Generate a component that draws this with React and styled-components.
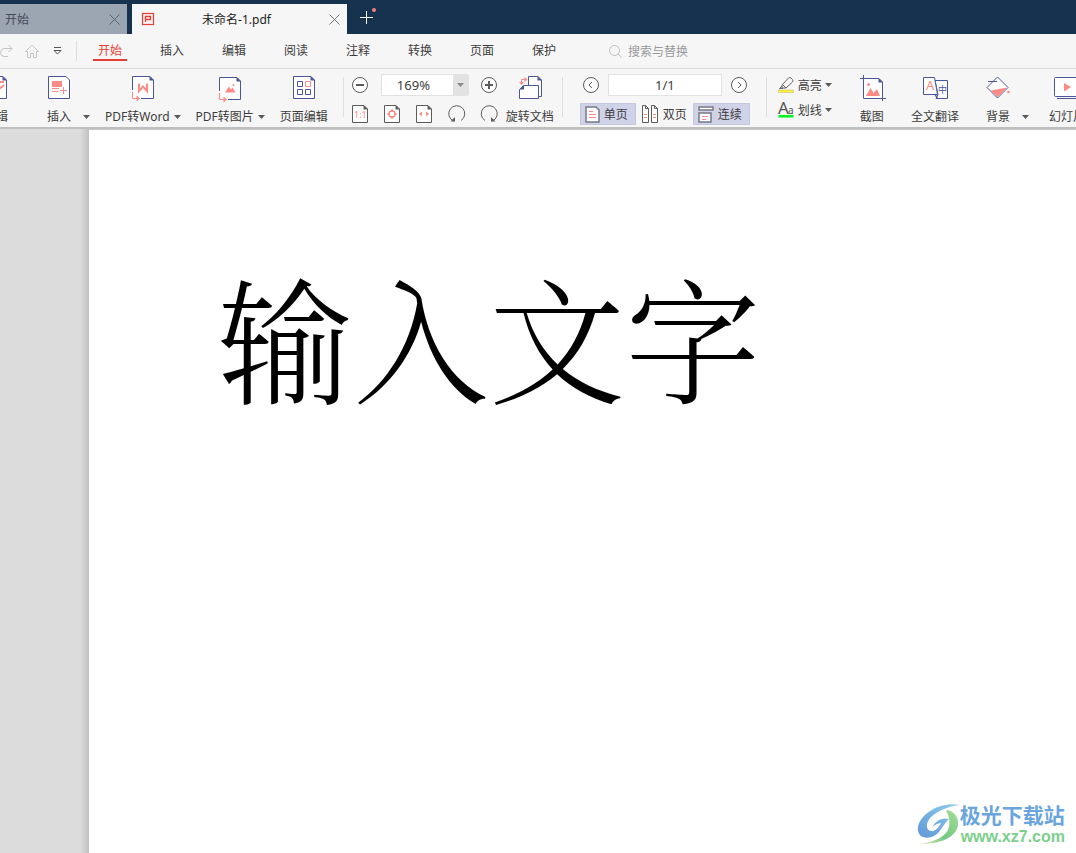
import React, { useState } from 'react'
import styled, { createGlobalStyle } from 'styled-components'

const GlobalStyle = createGlobalStyle`
  * {
    box-sizing: border-box;
  }
  body {
    margin: 0;
    overflow: hidden;
    background: #ffffff;
    color: #3d3d3d;
    font-family: "Noto Sans", "Noto Sans CJK SC", sans-serif;
    font-size: 12px;
  }
  button, input, select {
    font: inherit;
    color: inherit;
    border: none;
    margin: 0;
    padding: 0;
    background: none;
    outline: none;
  }
  svg {
    display: block;
    flex-shrink: 0;
    overflow: visible;
  }
`

const Window = styled.div`
  display: flex;
  flex-direction: column;
  height: 100vh;
  overflow: hidden;
`

const TabBar = styled.header`
  display: flex;
  gap: 5px;
  height: 34px;
  flex-shrink: 0;
  padding-top: 4px;
  background: #17324f;
`

const Tab = styled.div`
  display: flex;
  align-items: center;
  width: ${(p) => p.$width};
  padding: 0 7px 0 ${(p) => (p.$active ? '10px' : '5px')};
  background: ${(p) => (p.$active ? '#f6f6f6' : '#9ca6b3')};
  color: ${(p) => (p.$active ? '#222222' : '#444b55')};
`

const TabTitle = styled.button`
  flex: 1;
  height: 30px;
  padding-right: 10px;
  text-align: ${(p) => (p.$center ? 'center' : 'left')};
`

const IconButton = styled.button`
  display: flex;
  align-items: center;
  justify-content: center;
`

const NewTab = styled(IconButton)`
  width: 30px;
  height: 26px;
`

const MenuBar = styled.div`
  display: flex;
  align-items: center;
  height: 35px;
  flex-shrink: 0;
  background: #f6f6f6;
  border-bottom: 1px solid #dcdcdc;
`

const QuickAccess = styled.div`
  display: flex;
  align-items: center;
  gap: 12px;
  height: 20px;
  width: 77px;
  border-right: 1px solid #dddddd;
`

const Menu = styled.nav`
  display: flex;
  gap: 28px;
  margin-left: 16px;
`

const MenuItem = styled.button`
  width: 34px;
  height: 20px;
  line-height: 20px;
  white-space: nowrap;
  color: ${(p) => (p.$active ? '#e83e32' : '#3d3d3d')};
  box-shadow: inset 0 -2px ${(p) => (p.$active ? '#e83e32' : 'transparent')};
`

const Search = styled.label`
  display: flex;
  align-items: center;
  gap: 6px;
  margin-left: 48px;
  color: #9a9a9a;
`

const SearchInput = styled.input`
  width: 120px;
  &::placeholder {
    color: #9a9a9a;
    opacity: 1;
  }
`

const Toolbar = styled.div`
  display: flex;
  height: 60px;
  flex-shrink: 0;
  padding-top: 5px;
  overflow: hidden;
  background: #f6f6f6;
  border-bottom: 2px solid #bebebe;
`

const ToolGroup = styled.div`
  display: flex;
  flex-shrink: 0;
  gap: ${(p) => p.$gap || '15px'};
  padding: ${(p) => p.$padding || '0'};
`

const ConvertGroup = styled(ToolGroup)`
  margin-left: -16px;
`

const Tool = styled.button`
  display: flex;
  flex-direction: column;
  align-items: center;
  gap: 9px;
  padding-top: 2px;
  height: 52px;
`

const ToolLabel = styled.span`
  display: flex;
  align-items: center;
  gap: 4px;
  line-height: 16px;
  white-space: nowrap;
`

const SplitTool = styled.div`
  display: flex;
  align-items: flex-start;
  gap: 12px;
`

const CaretButton = styled(IconButton)`
  height: 52px;
  padding-top: 34px;
`

const Divider = styled.div`
  width: 1px;
  height: 40px;
  margin-top: 3px;
  flex-shrink: 0;
  background: #dfdfdf;
`

const Stack = styled.div`
  display: flex;
  flex-direction: column;
  gap: ${(p) => p.$gap || '7px'};
`

const Row = styled.div`
  display: flex;
  align-items: center;
  justify-content: space-between;
  gap: ${(p) => p.$gap || '0'};
  padding: ${(p) => p.$padding || '0'};
  height: 22px;
`

const SelectBox = styled.div`
  display: grid;
  grid-template-columns: 71px 16px;
  height: 22px;
  background: #ffffff;
  border: 1px solid #e2e2e2;
  width: 87px;
  font-size: 13px;
`

const ZoomSelect = styled.select`
  grid-area: 1 / 1 / 2 / 3;
  appearance: none;
  padding-left: 15px;
`

const SelectArrow = styled.span`
  grid-area: 1 / 2 / 2 / 3;
  display: flex;
  align-items: center;
  justify-content: center;
  pointer-events: none;
  background: #e2e2e2;
`

const PageInput = styled.input`
  width: 114px;
  height: 22px;
  font-size: 13px;
  text-align: center;
  background: #ffffff;
  border: 1px solid #e2e2e2;
`

const ViewButton = styled.button`
  display: flex;
  align-items: center;
  gap: 4px;
  height: 22px;
  padding: 0 ${(p) => (p.$active ? '7px' : '0')} 0 ${(p) => (p.$active ? '4px' : '0')};
  white-space: nowrap;
  border: ${(p) => (p.$active ? '1px solid #c5c7e0' : 'none')};
  background: ${(p) => (p.$active ? '#d0d2e8' : 'transparent')};
`

const MarkButton = styled.button`
  display: flex;
  align-items: center;
  gap: 3px;
  height: 22px;
  white-space: nowrap;
`

const Workspace = styled.main`
  position: relative;
  display: flex;
  flex: 1;
  min-height: 0;
`

const Gutter = styled.div`
  width: 89px;
  flex-shrink: 0;
  background: linear-gradient(to right, #dcdcdc 80px, #c2c2c2 89px);
`

const Page = styled.article`
  flex: 1;
  padding: 105px 0 0 128px;
  background: #ffffff;
  border-top: 1px solid #c8c8c8;
`

const PageText = styled.p`
  margin: 0;
  color: #000000;
  font-family: "Noto Serif CJK SC", "Noto Sans CJK SC", serif;
  font-weight: 300;
  font-size: 136px;
  line-height: 200px;
  white-space: nowrap;
`

const Watermark = styled.a`
  position: absolute;
  right: 11px;
  bottom: 6px;
  display: flex;
  align-items: center;
  text-decoration: none;
`

const SiteName = styled.span`
  color: #6aa5de;
  font-size: 21px;
  font-weight: 700;
  line-height: 24px;
`

const SiteUrl = styled.span`
  color: #7bcf8d;
  font-family: "Liberation Sans", sans-serif;
  font-size: 16px;
  font-weight: 700;
  line-height: 20px;
  padding-left: 1px;
`

const navy = '#4b5599'
const coral = '#fd8a84'
const grey = '#5c5c5c'

const Caret = ({ color = '#5a5a5a' }) => (
  <svg width="7" height="4" viewBox="0 0 7 4">
    <path d="M0 0h7L3.5 4z" fill={color} />
  </svg>
)

const CloseIcon = ({ color }) => (
  <svg width="11" height="11" viewBox="0 0 11 11" stroke={color}>
    <path d="M.5.5l10 10M10.5.5l-10 10" />
  </svg>
)

const PdfIcon = () => (
  <svg width="12" height="12" viewBox="0 0 12 12" fill="none" stroke="#e83e32">
    <rect x=".5" y=".5" width="11" height="11" strokeWidth="1.2" />
    <path d="M3.5 9V3.5h5v3h-5" strokeWidth="1.3" />
  </svg>
)

const ToolIcon = ({ children }) => (
  <svg width="24" height="24" viewBox="0 0 24 24" fill="none" stroke={navy}>
    {children}
  </svg>
)

const Sheet = () => (
  <>
    <path d="M1.5.5H19L22.5 4v18.5h-21z" fill="#fff" />
    <path d="M18.5 0v4.5H23z" fill={navy} stroke="none" />
  </>
)

// sheet with an open bottom-left corner and the "convert to" arrow
const ConvertSheet = () => (
  <>
    <path d="M1 0h18l4 4v19H1z" fill="#fff" stroke="none" />
    <path d="M1.5 14V.5H19L22.5 4v18.5H10" />
    <path d="M18.5 0v4.5H23z" fill={navy} stroke="none" />
    <path d="M1.5 15.5v7H8" stroke={coral} />
    <path d="M5.5 19.5l3.5 3-3.5 3z" fill={coral} stroke="none" />
  </>
)

const EditIcon = () => (
  <ToolIcon>
    <Sheet />
    <path d="M6 12l4 5L20 9M12 6h8" stroke={coral} strokeWidth="2" />
  </ToolIcon>
)

const InsertIcon = () => (
  <ToolIcon>
    <path d="M1.5.5H19L22.5 4v18.5h-21z" fill="#fff" />
    <path d="M5 5h10v6H5z" fill={coral} stroke="none" />
    <path d="M5 12.5h7M5 15.500h6M13 14.500h7M16.500 11v7" stroke={coral} />
  </ToolIcon>
)

const WordIcon = () => (
  <ToolIcon>
    <ConvertSheet />
    <path d="M8 7.5v7.500l4-4.500 4 4.500v-7.500" stroke={coral} strokeWidth="2" />
  </ToolIcon>
)

const PictureIcon = () => (
  <ToolIcon>
    <g transform="translate(0 1)">
      <ConvertSheet />
      <path d="M7 15.500l4-6 2 3 1.500-2 3 5z" fill={coral} stroke="none" />
      <circle cx="15.500" cy="8" r="1" fill={coral} stroke="none" />
    </g>
  </ToolIcon>
)

const PageEditIcon = () => (
  <ToolIcon>
    <Sheet />
    <path d="M5.500 5.500h5v5h-5zM5.500 13.500h5v5h-5zM13.500 13.500h5v5h-5z" />
    <path d="M13.500 5.500h5v5h-5z" stroke={coral} />
  </ToolIcon>
)

const RotateDocIcon = () => (
  <ToolIcon>
    <path d="M10.500 9V.5H20L23.500 4v16.500H21" fill="#fff" />
    <path d="M19.500 0v4.500H24z" fill={navy} stroke="none" />
    <path d="M5.500 9.500h15v13h-19v-9z" fill="#fff" />
    <path d="M6 9v4.500H1.500z" fill={navy} stroke="none" />
    <path d="M3.500 7V3.500H7" stroke={coral} />
    <path d="M6.500 1l3 2.500-3 2.500zM1 6h5l-2.500 3z" fill={coral} stroke="none" />
  </ToolIcon>
)

const CropIcon = () => (
  <ToolIcon>
    <path d="M3 2h15l4 4v17H3z" fill="#fff" stroke="none" />
    <path d="M3.500-1v23.500H26M0 2.500h19L22.500 6v19" />
    <path d="M18.500 2v4.500H23z" fill={navy} stroke="none" />
    <path d="M6 20l4.500-8 3 5 3.500-4 3 7z" fill={coral} stroke="none" />
    <circle cx="8.500" cy="8.500" r="1.500" fill={coral} stroke="none" />
  </ToolIcon>
)

const TranslateIcon = () => (
  <ToolIcon>
    <path d="M12 4.500h12.500v18H13l2-4z" fill="#fff" />
    <path d="M.5 1.500h11l3 17H.5z" fill="#fff" />
    <path d="M12 18.500l2 4v-4" />
    <text x="3" y="14" fontSize="13" fill={coral} stroke="none">A</text>
    <text x="15" y="17" fontSize="9" fill={navy} stroke="none">中</text>
  </ToolIcon>
)

const BackgroundIcon = () => (
  <ToolIcon>
    <path d="M11.500 1L22 11.500 11.500 22 1 11.500z" fill="#fff" />
    <path d="M5 14.500L21 11.500 11.500 21z" fill={coral} stroke="none" />
    <path d="M2 5.500h9" />
    <circle cx="22.500" cy="16" r="1.300" fill={coral} stroke="none" />
  </ToolIcon>
)

const SlideIcon = () => (
  <svg width="36" height="24" viewBox="0 0 36 24" fill="none" stroke={navy}>
    <rect x="5.500" y="1.500" width="29" height="19" rx="1" fill="#fff" />
    <path d="M8 22.500h25" />
    <path d="M15 7l7 4-7 4.500z" fill={coral} stroke="none" />
  </svg>
)

const RoundIcon = ({ d, width = 1 }) => (
  <svg width="16" height="16" viewBox="0 0 16 16" fill="none" stroke={grey}>
    <circle cx="8" cy="8" r="7.500" fill="#fff" />
    <path d={d} strokeWidth={width} />
  </svg>
)

const FitIcon = ({ children }) => (
  <svg width="16" height="18" viewBox="0 0 16 18" fill="none" stroke={grey}>
    <path d="M.5.5H12L15.500 4v13.500H.5z" fill="#fff" />
    <path d="M11.500 0v4.500H16z" fill={grey} stroke="none" />
    {children}
  </svg>
)

const TurnIcon = ({ flip }) => (
  <svg width="16" height="18" viewBox="1 0 16 18" fill="none" stroke={grey}>
    <g transform={flip ? 'translate(18 0) scale(-1 1)' : undefined}>
      <path d="M5.500 16A8 8 0 1 1 13 15.500" />
      <path d="M2.500 16.500H7V12z" fill={grey} stroke="none" />
    </g>
  </svg>
)

const SinglePageIcon = () => (
  <svg width="15" height="17" viewBox="0 0 15 17" fill="none" stroke="#777a85">
    <path d="M1 1h10l3 3v12H1z" fill="#fff" strokeWidth="1.500" />
    <path d="M4 5.500h4M4 8.500h7M4 11.500h7" stroke={coral} />
  </svg>
)

const DoublePageIcon = () => (
  <svg width="17" height="18" viewBox="0 0 17 18" fill="none" stroke={grey}>
    <path d="M.5.5h3l3 3v14h-6zM9.500.5h3l3 3v14h-6z" fill="#fff" />
    <path d="M3.500.5v3h3M12.500.5v3h3" />
    <path d="M2 9.500h3M2 12.500h3M11 9.500h3M11 12.500h3" stroke={coral} />
  </svg>
)

const ContinuousIcon = () => (
  <svg width="16" height="17" viewBox="0 0 16 17" fill="none" stroke="#777a85" strokeWidth="1.500">
    <path d="M1 1h14v3H1z" fill="#fff" />
    <path d="M1 16V7h12v9z" fill="#fff" />
    <path d="M4 10.500h6M4 13.500h4" stroke={coral} strokeWidth="1" />
  </svg>
)

const HighlightIcon = () => (
  <svg width="17" height="16" viewBox="0 0 17 16" fill="none" stroke="#666">
    <path d="M4 8L10.500 1Q12 0 13 1L14.500 2.500Q15.500 4 14.500 5L8 11H4zM4.500 7.500L8 11M4 9L1.500 11.500H5" />
    <path d="M.5 13h15v2.500H.5z" fill="#ffee3c" stroke="#bdb76b" strokeWidth=".5" />
  </svg>
)

const UnderlineIcon = () => (
  <svg width="17" height="16" viewBox="0 0 17 16">
    <text x="0" y="12" fontSize="17" fill="#555">A</text>
    <text x="10" y="12" fontSize="10" fill="#555">a</text>
    <path d="M.5 13h15v2.500H.5z" fill="#00f51c" />
  </svg>
)

const SwirlLogo = () => (
  <svg width="43" height="42" viewBox="0 0 43 42">
    <defs>
      <linearGradient id="sky" x1="1" y1="0" x2="0" y2="1">
        <stop offset="0" stopColor="#8fd0ee" />
        <stop offset="1" stopColor="#5f97d8" />
      </linearGradient>
      <linearGradient id="leaf" x1="0" y1="1" x2="1" y2="0">
        <stop offset="0" stopColor="#e3e6a6" />
        <stop offset=".4" stopColor="#72c985" />
        <stop offset="1" stopColor="#a5dd94" />
      </linearGradient>
    </defs>
    <path d="M31 6C37 8 42 13 41 21 40 31 27 40 4 40 18 38 30 32 32 23 33 17 32 11 29 7z" fill="url(#leaf)" />
    <path d="M43 1C29-2 14 4 6 13 0 20-1 28 4 32c5 3 13 2 18-4 3-4 5-8 10-13-6-2-13 1-17 8 4-3 7-4 9-4-2 4-6 9-10 8-6-1-5-9 0-14C21 7 31 2 43 1z" fill="url(#sky)" />
  </svg>
)

const menuItems = ['开始', '插入', '编辑', '阅读', '注释', '转换', '页面', '保护']

const App = () => {
  const [menu, setMenu] = useState('开始')
  const [zoom, setZoom] = useState('169%')
  const [layout, setLayout] = useState('单页')
  const [continuous, setContinuous] = useState(true)

  return (
    <>
      <GlobalStyle />
      <Window>
        <TabBar>
          <Tab $width="127px">
            <TabTitle>开始</TabTitle>
            <IconButton aria-label="关闭"><CloseIcon color="#5b636e" /></IconButton>
          </Tab>
          <Tab $width="215px" $active>
            <PdfIcon />
            <TabTitle $center>未命名-1.pdf</TabTitle>
            <IconButton aria-label="关闭"><CloseIcon color="#777777" /></IconButton>
          </Tab>
          <NewTab aria-label="新建">
            <svg width="18" height="18" viewBox="0 0 18 18">
              <path d="M2 9.500h13M8.500 3v13" stroke="#fff" />
              <circle cx="16" cy="2" r="2" fill="#f47d7d" />
            </svg>
          </NewTab>
        </TabBar>

        <MenuBar>
          <QuickAccess>
            <IconButton aria-label="恢复">
              <svg width="13" height="14" viewBox="0 0 13 14" fill="none" stroke="#c4c4c4">
                <path d="M8 12.500H4Q.5 12 .5 8.500T4 4.500h8M8.500 1L12 4.500 8.500 8" />
              </svg>
            </IconButton>
            <IconButton aria-label="主页">
              <svg width="14" height="14" viewBox="0 0 14 14" fill="none" stroke="#c4c4c4">
                <path d="M.5 7.500L7 1l6.500 6.500h-2v6h-3v-4h-3v4h-3v-6z" />
              </svg>
            </IconButton>
            <IconButton aria-label="更多">
              <svg width="13" height="8" viewBox="0 0 13 8" fill="none" stroke="#555">
                <path d="M3 .5h7M3 3.500h7L6.500 7z" />
              </svg>
            </IconButton>
          </QuickAccess>
          <Menu>
            {menuItems.map((item) => (
              <MenuItem key={item} $active={item === menu} onClick={() => setMenu(item)}>{item}</MenuItem>
            ))}
          </Menu>
          <Search>
            <svg width="13" height="13" viewBox="0 0 13 13" fill="none" stroke="#c0c0c0">
              <circle cx="5.500" cy="5.500" r="5" />
              <path d="M9 9l3.500 3.500" />
            </svg>
            <SearchInput aria-label="搜索与替换" placeholder="搜索与替换" />
          </Search>
        </MenuBar>

        <Toolbar>
          <ConvertGroup $padding="0 15px 0 0">
            <ToolGroup $padding="0 24px 0 0">
              <Tool><EditIcon /><ToolLabel>编辑</ToolLabel></Tool>
            </ToolGroup>
            <SplitTool>
              <Tool><InsertIcon /><ToolLabel>插入</ToolLabel></Tool>
              <CaretButton aria-label="插入选项"><Caret /></CaretButton>
            </SplitTool>
            <Tool><WordIcon /><ToolLabel>PDF转Word <Caret /></ToolLabel></Tool>
            <Tool><PictureIcon /><ToolLabel>PDF转图片 <Caret /></ToolLabel></Tool>
            <Tool><PageEditIcon /><ToolLabel>页面编辑</ToolLabel></Tool>
          </ConvertGroup>
          <Divider />
          <ToolGroup $gap="9px" $padding="0 8px">
            <Stack>
              <Row $gap="13px">
                <IconButton aria-label="缩小"><RoundIcon d="M4 8h8" width={2} /></IconButton>
                <SelectBox>
                  <ZoomSelect aria-label="缩放" value={zoom} onChange={(e) => setZoom(e.target.value)}>
                    <option>100%</option>
                    <option>169%</option>
                    <option>200%</option>
                  </ZoomSelect>
                  <SelectArrow><Caret color="#8a8a8a" /></SelectArrow>
                </SelectBox>
                <IconButton aria-label="放大"><RoundIcon d="M4 8h8M8 4v8" width={2} /></IconButton>
              </Row>
              <Row>
                <IconButton aria-label="实际大小">
                  <FitIcon><text x="2" y="13" fontSize="9" fill={coral} stroke="none">1:1</text></FitIcon>
                </IconButton>
                <IconButton aria-label="适合页面">
                  <FitIcon>
                    <path d="M8 4l2.500 2.500h-5zM8 14l2.500-2.500h-5zM3 9l2.500-2.500v5zM13 9l-2.500-2.500v5z" fill={coral} stroke="none" />
                    <rect x="5.500" y="6.500" width="5" height="5" stroke={coral} />
                  </FitIcon>
                </IconButton>
                <IconButton aria-label="适合宽度">
                  <FitIcon>
                    <path d="M3 9l3-2.500v5zM13 9l-3-2.500v5z" fill={coral} stroke="none" />
                  </FitIcon>
                </IconButton>
                <IconButton aria-label="向左旋转"><TurnIcon /></IconButton>
                <IconButton aria-label="向右旋转"><TurnIcon flip /></IconButton>
              </Row>
            </Stack>
            <Tool><RotateDocIcon /><ToolLabel>旋转文档</ToolLabel></Tool>
          </ToolGroup>
          <Divider />
          <ToolGroup $padding="0 16px 0 17px">
            <Stack>
              <Row $padding="0 3px" $gap="9px">
                <IconButton aria-label="上一页"><RoundIcon d="M9 5L6 8l3 3" /></IconButton>
                <PageInput aria-label="页码" defaultValue="1/1" />
                <IconButton aria-label="下一页"><RoundIcon d="M7 5l3 3-3 3" /></IconButton>
              </Row>
              <Row $gap="5px">
                <ViewButton $active={layout === '单页'} onClick={() => setLayout('单页')}><SinglePageIcon />单页</ViewButton>
                <ViewButton $active={layout === '双页'} onClick={() => setLayout('双页')}><DoublePageIcon />双页</ViewButton>
                <ViewButton $active={continuous} onClick={() => setContinuous(!continuous)}><ContinuousIcon />连续</ViewButton>
              </Row>
            </Stack>
          </ToolGroup>
          <Divider />
          <ToolGroup $padding="0 28px 0 11px">
            <Stack $gap="3px">
              <MarkButton><HighlightIcon />高亮 <Caret /></MarkButton>
              <MarkButton><UnderlineIcon />划线 <Caret /></MarkButton>
            </Stack>
          </ToolGroup>
          <ToolGroup $gap="27px">
            <Tool><CropIcon /><ToolLabel>截图</ToolLabel></Tool>
            <Tool><TranslateIcon /><ToolLabel>全文翻译</ToolLabel></Tool>
            <ToolGroup $gap="20px">
              <SplitTool>
                <Tool><BackgroundIcon /><ToolLabel>背景</ToolLabel></Tool>
                <CaretButton aria-label="背景选项"><Caret /></CaretButton>
              </SplitTool>
              <Tool><SlideIcon /><ToolLabel>幻灯片</ToolLabel></Tool>
            </ToolGroup>
          </ToolGroup>
        </Toolbar>

        <Workspace>
          <Gutter />
          <Page>
            <PageText>输入文字</PageText>
          </Page>
          <Watermark href="#">
            <SwirlLogo />
            <Stack $gap="0px">
              <SiteName>极光下载站</SiteName>
              <SiteUrl>www.xz7.com</SiteUrl>
            </Stack>
          </Watermark>
        </Workspace>
      </Window>
    </>
  )
}

export default App
